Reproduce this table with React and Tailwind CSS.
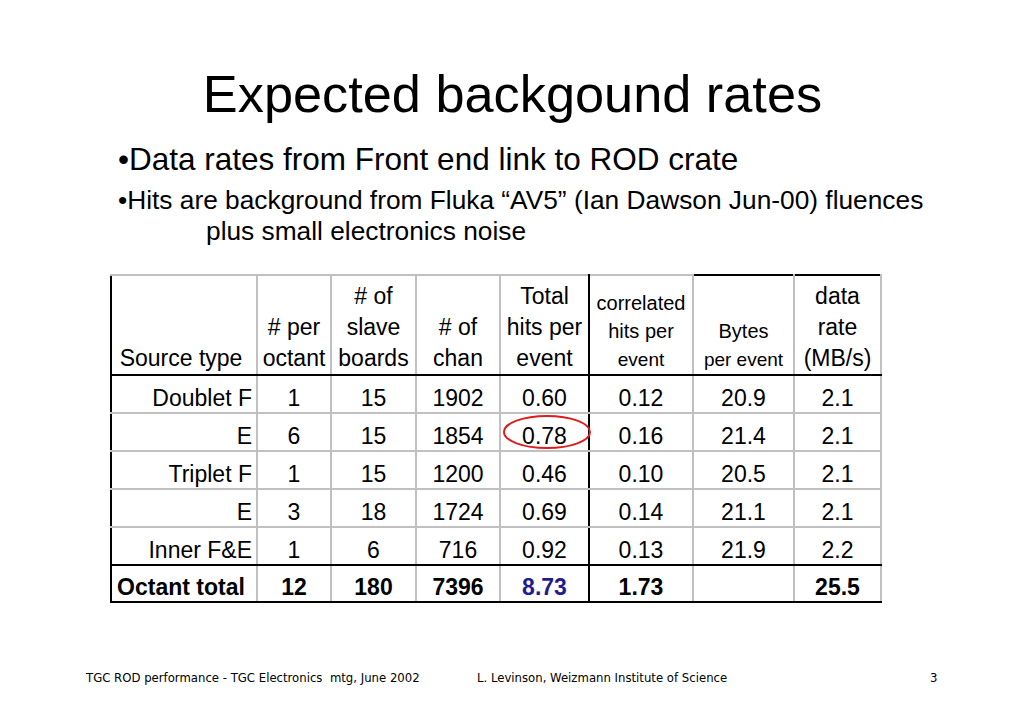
import React from "react";

const rows = [
  ["Doublet F", "1", "15", "1902", "0.60", "0.12", "20.9", "2.1"],
  ["E", "6", "15", "1854", "0.78", "0.16", "21.4", "2.1"],
  ["Triplet F", "1", "15", "1200", "0.46", "0.10", "20.5", "2.1"],
  ["E", "3", "18", "1724", "0.69", "0.14", "21.1", "2.1"],
  ["Inner F&E", "1", "6", "716", "0.92", "0.13", "21.9", "2.2"],
];

const total = ["Octant total", "12", "180", "7396", "8.73", "1.73", "", "25.5"];

const widths = ["w-[146px]", "w-[74px]", "w-[85px]", "w-[84px]", "w-[89px]", "w-[104px]", "w-[101px]", "w-[87px]"];

// right border: black after "Total hits per event", grey elsewhere
function rightBorder(i) {
  return i === 4 ? "border-r-2 border-r-black" : "border-r-2 border-r-[#c0c0c0]";
}

function Ellipse() {
  return (
    <svg className="absolute left-[1px] top-[1px]" width="90" height="35" viewBox="0 0 90 35">
      <ellipse cx="45" cy="17" rx="43" ry="16" fill="none" stroke="#e01b1b" strokeWidth="2" />
    </svg>
  );
}

export default function App() {
  return (
    <div
      className="w-[1023px] h-[708px] bg-white text-black flex flex-col overflow-hidden"
      style={{ fontFamily: '"Liberation Sans", Arial, sans-serif' }}
    >
      {/* Titulo */}
      <h1 className="pt-[68px] pl-[2px] text-center text-[52.3px] leading-[52px] font-normal">Expected backgound rates</h1>

      {/* Bullets */}
      <div className="mt-[23px] pl-[118px] text-[31.5px] leading-[32px]">•Data rates from Front end link to ROD crate</div>
      <div className="mt-[10px] text-[26.3px] leading-[31px]">
        <div className="pl-[118px]">•Hits are background from Fluka “AV5” (Ian Dawson Jun-00) fluences</div>
        <div className="pl-[206px]">plus small electronics noise</div>
      </div>

      {/* Tabla */}
      <table className="mt-[27px] ml-[110px] w-[772px] table-fixed border-collapse border-l-2 border-l-black text-[23px]">
        <colgroup>
          {widths.map((w, i) => (
            <col key={i} className={w} />
          ))}
        </colgroup>
        <thead>
          <tr className="h-[100px]">
            <th className={"align-bottom font-normal leading-[31px] pr-[6px] border-t-2 border-t-[#c0c0c0] border-b-2 border-b-black " + rightBorder(0)}>Source type</th>
            <th className={"align-bottom font-normal leading-[31px] border-t-2 border-t-[#c0c0c0] border-b-2 border-b-black " + rightBorder(1)}>
              # per<br />octant
            </th>
            <th className={"align-bottom font-normal leading-[31px] border-t-2 border-t-[#c0c0c0] border-b-2 border-b-black " + rightBorder(2)}>
              # of<br />slave<br />boards
            </th>
            <th className={"align-bottom font-normal leading-[31px] border-t-2 border-t-[#c0c0c0] border-b-2 border-b-black " + rightBorder(3)}>
              # of<br />chan
            </th>
            <th className={"align-bottom font-normal leading-[31px] border-t-2 border-t-[#c0c0c0] border-b-2 border-b-black " + rightBorder(4)}>
              Total<br />hits per<br />event
            </th>
            <th className={"align-bottom font-normal leading-[28px] text-[20px] border-t-2 border-t-[#c0c0c0] border-b-2 border-b-black " + rightBorder(5)}>
              correlated<br />hits per<br /><span className="text-[19px]">event</span>
            </th>
            <th className={"align-bottom font-normal leading-[28px] text-[20px] border-t-2 border-t-black border-b-2 border-b-black " + rightBorder(6)}>
              Bytes<br /><span className="text-[19px]">per event</span>
            </th>
            <th className={"align-bottom font-normal leading-[31px] border-t-2 border-t-black border-b-2 border-b-black " + rightBorder(7)}>
              data<br />rate<br />(MB/s)
            </th>
          </tr>
        </thead>
        <tbody>
          {rows.map((r, ri) => (
            <tr key={ri} className="h-[38px]">
              {r.map((c, ci) => (
                <td
                  key={ci}
                  className={
                    "align-bottom leading-[26px] pb-[1px] " +
                    (ci === 0 ? "text-right pr-[4px] " : "text-center ") +
                    (ri === rows.length - 1 ? "border-b-2 border-b-black " : "border-b-2 border-b-[#c0c0c0] ") +
                    (ri === 1 && ci === 4 ? "relative " : "") +
                    rightBorder(ci)
                  }
                >
                  {c}
                  {ri === 1 && ci === 4 && <Ellipse />}
                </td>
              ))}
            </tr>
          ))}
          <tr className="h-[37px]">
            {total.map((c, ci) => (
              <td
                key={ci}
                className={
                  "align-bottom leading-[26px] pb-[1px] font-bold text-center border-b-2 border-b-black " +
                  (ci === 0 ? "pr-[6px] " : "") +
                  (ci === 4 ? "text-[#1d1d8f] " : "") +
                  rightBorder(ci)
                }
              >
                {c}
              </td>
            ))}
          </tr>
        </tbody>
      </table>

      {/* Pie de pagina */}
      <div
        className="mt-[68px] ml-[86px] flex text-[13px] leading-none"
        style={{ fontFamily: '"DejaVu Sans Condensed", "DejaVu Sans", sans-serif' }}
      >
        <span className="w-[391px] whitespace-pre">TGC ROD performance - TGC Electronics  mtg, June 2002</span>
        <span className="w-[453px]">L. Levinson, Weizmann Institute of Science</span>
        <span>3</span>
      </div>
    </div>
  );
}
